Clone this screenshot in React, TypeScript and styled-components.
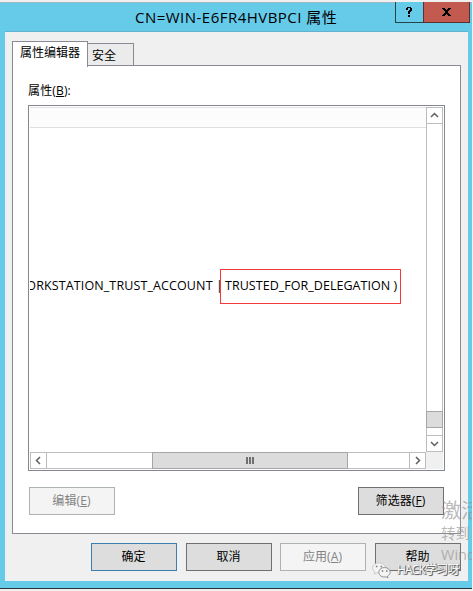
import React from "react";
import styled, { createGlobalStyle, css } from "styled-components";

const GlobalStyle = createGlobalStyle`
  * { box-sizing: border-box; }
  body { margin: 0; background: #f0f0f0; overflow: hidden; }
`;

const Screen = styled.div`
  position: relative;
  width: 473px;
  height: 591px;
  padding-top: 2px;
  overflow: hidden;
  background: #f0f0f0;
  color: #000;
  font: 12px/16px "Open Sans", "Noto Sans CJK SC", sans-serif;
`;

const Window = styled.div`
  display: flex;
  flex-direction: column;
  width: 472px;
  height: 587px;
  padding: 0 4px 0 5px;
  background: #66cae9;
  border-top: 1px solid #9fb9c4;
  border-bottom: 1px solid #25323a;
`;

const TitleBar = styled.header`
  position: relative;
  flex: none;
  height: 28px;
`;

const Title = styled.h1`
  margin: 0;
  padding: 4px 0 0 130px;
  font-size: 15px;
  line-height: 20px;
  font-weight: 400;
  letter-spacing: 0.48px;
  white-space: nowrap;
`;

const CaptionButtons = styled.div`
  position: absolute;
  top: -1px;
  right: -2px;
  display: flex;
`;

const CaptionButton = styled.button<{ $close?: boolean }>`
  display: flex;
  align-items: center;
  justify-content: center;
  width: ${(p) => (p.$close ? 47 : 28)}px;
  height: 21px;
  padding: 0;
  border: 1px solid ${(p) => (p.$close ? "#5b302f" : "#28414a")};
  border-top: 0;
  border-right-width: ${(p) => (p.$close ? 1 : 0)}px;
  background: ${(p) => (p.$close ? "#c35a50" : "#66cae9")};
`;

const Client = styled.main`
  width: 463px;
  height: 550px;
  padding: 8px 7px 0;
  background: #f0f0f0;
  border-top: 1px solid #62b1cf;
`;

const Tabs = styled.nav`
  display: flex;
  align-items: flex-end;
  height: 25px;
`;

const Tab = styled.div<{ $active?: boolean }>`
  border: 1px solid #898a93;
  white-space: nowrap;
  ${(p) =>
    p.$active
      ? css`
          position: relative;
          z-index: 1;
          width: 76px;
          height: 26px;
          margin-bottom: -2px;
          padding: 3px 0 0 7px;
          background: #fff;
          border-bottom: 0;
        `
      : css`
          width: 47px;
          height: 23px;
          margin-left: -1px;
          margin-bottom: -1px;
          padding: 4px 0 0 4px;
          background: #ebebeb;
        `}
`;

const Panel = styled.section`
  width: 449px;
  height: 469px;
  padding: 17px 15px 0;
  border: 1px solid #898a93;
  background: #fff;
`;

const Label = styled.div`
  height: 22px;
  letter-spacing: 0.15px;
  white-space: nowrap;
`;

const List = styled.div`
  display: grid;
  grid-template: 345px 17px / 396px 17px;
  width: 417px;
  height: 366px;
  padding: 1px;
  border: 1px solid #828790;
  background: #fff;
`;

const Content = styled.div`
  overflow: hidden;
`;

const ListHeader = styled.div`
  height: 21px;
  background: #fcfcfc;
  border-top: 1px solid #e2e2e2;
  border-bottom: 1px solid #dfdfdf;
`;

const ValueRow = styled.div`
  display: flex;
  align-items: flex-start;
  justify-content: flex-end;
  height: 35px;
  margin-top: 141px;
  padding-right: 25px;
  font-size: 12.5px;
  white-space: nowrap;
`;

const Flags = styled.span`
  flex: none;
  margin-right: -3px;
  padding: 9px 0 0;
  letter-spacing: 0.12px;
`;

const Highlight = styled.span`
  flex: none;
  width: 181px;
  height: 35px;
  padding: 8px 0 0 4px;
  border: 1px solid #f33b3b;
  letter-spacing: 0.04px;
`;

const Scrollbar = styled.div<{ $horizontal?: boolean }>`
  display: flex;
  flex-direction: ${(p) => (p.$horizontal ? "row" : "column")};
  border: 1px solid #bdbdbd;
  background: #fff;
`;

const Arrow = styled.div<{ $start?: boolean; $horizontal?: boolean }>`
  display: flex;
  flex: 0 0 15px;
  align-items: center;
  justify-content: center;
  height: 15px;
  box-shadow: ${(p) => {
    const d = p.$start ? 1 : -1;
    return p.$horizontal ? `${d}px 0 #bdbdbd` : `0 ${d}px #bdbdbd`;
  }};
`;

const Track = styled.div<{ $size: number }>`
  flex: 0 0 ${(p) => p.$size}px;
`;

const Thumb = styled.div<{ $size: number; $horizontal?: boolean }>`
  display: flex;
  align-items: center;
  justify-content: center;
  flex: 0 0 ${(p) => p.$size}px;
  gap: 1px;
  margin: ${(p) => (p.$horizontal ? "-1px 0" : "0 -1px")};
  border: 1px solid #a6a6a6;
  background: #dcdcdc;
`;

const Grip = styled.i`
  width: 2px;
  height: 7px;
  background: #707070;
`;

const Corner = styled.div`
  background: #f0f0f0;
`;

const PanelActions = styled.div`
  display: flex;
  justify-content: space-between;
  width: 415px;
  margin: 16px 0 0 1px;
`;

const Footer = styled.footer`
  display: flex;
  gap: 9px;
  margin: 9px 0 0 79px;
`;

const Button = styled.button<{ $primary?: boolean; $shift?: number }>`
  flex: none;
  width: 86px;
  height: 28px;
  margin: 0 0 0 ${(p) => p.$shift || 0}px;
  padding: 0 1px 1px 0;
  border: 1px solid ${(p) => (p.$primary ? "#3c7fb1" : "#707070")};
  background: #dddddd;
  color: #000;
  font: inherit;
  letter-spacing: 0.1px;
  &:disabled {
    border-color: #adb2b5;
    background: #f4f4f4;
    color: #838383;
  }
`;

const ActivationMark = styled.div`
  position: absolute;
  left: 441px;
  top: 498px;
  width: 31px;
  overflow: hidden;
  color: rgba(145, 145, 145, 0.65);
  white-space: nowrap;
  font-size: 14.5px;
  line-height: 21px;
`;

const ActivationTitle = styled.div`
  font-size: 20px;
  line-height: 25px;
`;

const AccountMark = styled.div`
  position: absolute;
  left: 372px;
  top: 561px;
  display: flex;
  align-items: center;
  gap: 6px;
  color: #fff;
  font-size: 12px;
  line-height: 18px;
  letter-spacing: -0.8px;
  white-space: nowrap;
  text-shadow: 1px 1px 0 #666, 0 1px 1px #888, 1px 0 1px #888;
`;

const chevrons = {
  up: "M1 6 4.5 2.5 8 6",
  down: "M1 3 4.5 6.5 8 3",
  left: "M6 1 2.5 4.5 6 8",
  right: "M3 1 6.5 4.5 3 8",
};

const Chevron = ({ to }: { to: keyof typeof chevrons }) => (
  <svg width="9" height="9" viewBox="0 0 9 9" fill="none" stroke="#606060" strokeWidth="1.5">
    <path d={chevrons[to]} />
  </svg>
);

const HelpIcon = () => (
  <svg width="7" height="10" viewBox="0 0 7 10" shapeRendering="crispEdges">
    <path d="M1 0h4v1h1v3H5v1H4v2H2V4h1V3h1V1H2v2H0V1h1zM2 8h2v2H2z" />
  </svg>
);

const CloseIcon = () => (
  <svg width="9" height="8" viewBox="0 0 9 8" shapeRendering="crispEdges">
    <path d="M0 0h3v1h1v1h1V1h1V0h3v1H8v1H7v1H6v2h1v1h1v1h1v1H6V7H5V6H4v1H3v1H0V7h1V6h1V5h1V3H2V2H1V1H0z" />
  </svg>
);

const ChatIcon = () => (
  <svg width="19" height="17" viewBox="0 0 19 17">
    <path d="M7 1C3.3 1 .6 3.2.6 6c0 1.6.9 3 2.4 4l-.6 2 2.3-1.2c4.8 1.3 8.8-1.3 8.8-4.8C13.5 3.2 10.5 1 7 1z" fill="#f4f4f4" stroke="#bbb" strokeWidth=".7" />
    <path d="M12.5 5.5c-3.2 0-5.7 2-5.7 4.8 0 3.2 3.4 5.4 7.2 4.5l2 1-.5-1.7c1.7-1 2.7-2.3 2.7-3.8 0-2.7-2.5-4.8-5.7-4.8z" fill="#f4f4f4" stroke="#888" strokeWidth=".9" />
    <path d="M4.6 3.7v1.6M9.3 3.7v1.6M10.5 8.2v1.6M14.7 8.2v1.6" stroke="#777" strokeWidth="1.5" />
  </svg>
);

export default function App() {
  return (
    <>
      <GlobalStyle />
      <Screen>
        <Window>
          <TitleBar>
            <Title>CN=WIN-E6FR4HVBPCI 属性</Title>
            <CaptionButtons>
              <CaptionButton aria-label="帮助"><HelpIcon /></CaptionButton>
              <CaptionButton $close aria-label="关闭"><CloseIcon /></CaptionButton>
            </CaptionButtons>
          </TitleBar>
          <Client>
            <Tabs>
              <Tab $active>属性编辑器</Tab>
              <Tab>安全</Tab>
            </Tabs>
            <Panel>
              <Label>属性(<u>B</u>):</Label>
              <List>
                <Content>
                  <ListHeader />
                  <ValueRow>
                    <Flags>WORKSTATION_TRUST_ACCOUNT |</Flags>
                    <Highlight>TRUSTED_FOR_DELEGATION )</Highlight>
                  </ValueRow>
                </Content>
                <Scrollbar>
                  <Arrow $start><Chevron to="up" /></Arrow>
                  <Track $size={288} />
                  <Thumb $size={17} />
                  <Track $size={8} />
                  <Arrow><Chevron to="down" /></Arrow>
                </Scrollbar>
                <Scrollbar $horizontal>
                  <Arrow $start $horizontal><Chevron to="left" /></Arrow>
                  <Track $size={106} />
                  <Thumb $size={196} $horizontal><Grip /><Grip /><Grip /></Thumb>
                  <Track $size={62} />
                  <Arrow $horizontal><Chevron to="right" /></Arrow>
                </Scrollbar>
                <Corner />
              </List>
              <PanelActions>
                <Button disabled>编辑(<u>E</u>)</Button>
                <Button>筛选器(<u>F</u>)</Button>
              </PanelActions>
            </Panel>
            <Footer>
              <Button $primary>确定</Button>
              <Button>取消</Button>
              <Button disabled $shift={-1}>应用(<u>A</u>)</Button>
              <Button>帮助</Button>
            </Footer>
          </Client>
        </Window>
        <ActivationMark>
          <ActivationTitle>激活 Windows</ActivationTitle>
          <div>转到</div>
          <div>Windows</div>
        </ActivationMark>
        <AccountMark><ChatIcon />HACK学习呀</AccountMark>
      </Screen>
    </>
  );
}
